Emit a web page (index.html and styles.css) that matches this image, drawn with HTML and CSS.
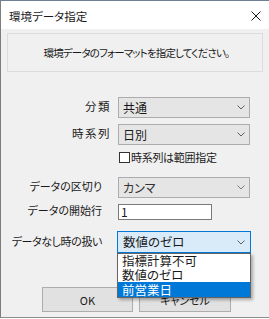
FILE: index.html
```html
<!DOCTYPE html>
<html lang="ja">
<head>
<meta charset="utf-8">
<title>環境データ指定</title>
<link rel="stylesheet" href="styles.css">
</head>
<body>
<div class="window">
  <div class="titlebar">
    <span class="title">環境データ指定</span>
    <svg class="close" width="10" height="10" viewBox="0 0 10 10"><path d="M0.5 0.5 L9.5 9.5 M9.5 0.5 L0.5 9.5" stroke="#1a1a1a" stroke-width="1" fill="none"/></svg>
  </div>
  <div class="client">
    <div class="message">環境データのフォーマットを指定してください。</div>
    <div class="form">
      <div class="row row-1">
        <span class="lbl">分類</span>
        <div class="combo"><span class="val">共通</span><svg class="chev" width="8" height="5" viewBox="0 0 8 5"><path d="M0.5 0.5 L4 4 L7.5 0.5" stroke="#606060" fill="none"/></svg></div>
      </div>
      <div class="row row-2">
        <span class="lbl">時系列</span>
        <div class="combo"><span class="val">日別</span><svg class="chev" width="8" height="5" viewBox="0 0 8 5"><path d="M0.5 0.5 L4 4 L7.5 0.5" stroke="#606060" fill="none"/></svg></div>
      </div>
      <div class="row row-check">
        <span class="lbl"></span>
        <label class="check"><span class="box"></span><span class="ctext">時系列は範囲指定</span></label>
      </div>
      <div class="row row-3">
        <span class="lbl lbl-wide">データの区切り</span>
        <div class="combo"><span class="val dim">カンマ</span><svg class="chev" width="8" height="5" viewBox="0 0 8 5"><path d="M0.5 0.5 L4 4 L7.5 0.5" stroke="#7a7a7a" fill="none"/></svg></div>
      </div>
      <div class="row row-4">
        <span class="lbl lbl-wide">データの開始行</span>
        <div class="textbox">1</div>
      </div>
      <div class="row row-5">
        <span class="lbl lbl-wide lbl-long">データなし時の扱い</span>
        <div class="combo combo-open"><span class="val big">数値のゼロ</span><svg class="chev" width="8" height="5" viewBox="0 0 8 5"><path d="M0.5 0.5 L4 4 L7.5 0.5" stroke="#606060" fill="none"/></svg>
          <ul class="droplist">
            <li>指標計算不可</li>
            <li>数値のゼロ</li>
            <li class="sel">前営業日</li>
          </ul>
        </div>
      </div>
    </div>
    <div class="buttons">
      <button class="btn">OK</button>
      <button class="btn">キャンセル</button>
    </div>
  </div>
</div>
</body>
</html>
```

FILE: styles.css
```css
html, body {
  margin: 0;
  padding: 0;
  background: #ffffff;
}
body {
  width: 269px;
  height: 319px;
  overflow: hidden;
  font-family: "Noto Sans CJK JP", "Noto Sans", sans-serif;
  font-feature-settings: "palt";
  color: #1a1a1a;
}
.window {
  box-sizing: border-box;
  width: 269px;
  height: 318px;
  border-top: 1px solid #6e7f96;
  border-left: 1px solid #7d7d7d;
  border-bottom: 1px solid #8c8c8c;
  display: flex;
  flex-direction: column;
}
.titlebar {
  height: 28px;
  flex: none;
  background: #fff;
  display: flex;
  align-items: center;
  justify-content: space-between;
  padding: 0 8px 0 8px;
}
.title {
  font-size: 11.5px;
  line-height: 14px;
  margin-top: 1px;
}
.close {
  display: block;
  margin-top: 1px;
}
.client {
  flex: 1;
  background: #f0f0f0;
  padding: 4px 6px 0 6px;
}
.message {
  box-sizing: border-box;
  height: 39px;
  border: 1px solid #dcdcdc;
  background: #f0f0f0;
  display: flex;
  align-items: center;
  justify-content: center;
  font-size: 10.5px;
  letter-spacing: -0.85px;
  padding-left: 3px;
}
.form {
  margin-top: 25px;
}
.row {
  display: flex;
  align-items: center;
}
.lbl {
  box-sizing: border-box;
  width: 111px;
  flex: none;
  text-align: right;
  white-space: nowrap;
  padding-right: 7px;
  padding-bottom: 3px;
  font-size: 11.5px;
  line-height: 14px;
  letter-spacing: 1.5px;
}
.lbl-wide {
  padding-right: 16px;
  font-size: 11px;
  letter-spacing: 0;
}
.lbl-long {
  letter-spacing: -0.4px;
}
.row-2 { margin-top: 6px; }
.row-check { margin-top: 5px; height: 14px; }
.row-3 { margin-top: 13px; }
.row-4 { margin-top: 5px; }
.row-5 { margin-top: 11px; }
.combo {
  position: relative;
  box-sizing: border-box;
  width: 132px;
  height: 21px;
  background: #e5e5e5;
  border: 1px solid #acacac;
  display: flex;
  align-items: center;
  justify-content: space-between;
  padding: 0 4px 0 4px;
}
.val {
  font-size: 12px;
  line-height: 14px;
}
.val.dim { color: #333; }
.val.big { font-size: 12.5px; }
.chev { display: block; }
.combo-open {
  margin-left: -1px;
  width: 134px;
  height: 22px;
  background: #d9ebf9;
  border-color: #0078d7;
  padding-left: 5px;
  padding-right: 5px;
}
.check {
  display: flex;
  align-items: center;
  gap: 1px;
}
.box {
  box-sizing: border-box;
  width: 11px;
  height: 11px;
  background: #fff;
  border: 1px solid #333;
  margin-left: 1px;
}
.ctext {
  font-size: 11px;
  line-height: 14px;
  letter-spacing: -0.3px;
}
.textbox {
  box-sizing: border-box;
  width: 94px;
  height: 16px;
  background: #fff;
  border: 1px solid #7a7a7a;
  font-size: 12px;
  line-height: 14px;
  padding-left: 2px;
}
.droplist {
  position: absolute;
  left: -1px;
  top: 21px;
  width: 134px;
  box-sizing: border-box;
  margin: 0;
  padding: 0;
  list-style: none;
  background: #fff;
  border: 1px solid #646464;
  box-shadow: 2px 2px 3px rgba(0, 0, 0, 0.3);
}
.droplist li {
  height: 14px;
  line-height: 14px;
  font-size: 12.5px;
  padding-left: 4px;
  white-space: nowrap;
}
.droplist li.sel {
  height: 15px;
  line-height: 15px;
  background: #0078d7;
  color: #fff;
}
.buttons {
  display: flex;
  gap: 6px;
  margin-top: 34px;
  padding-left: 35px;
}
.btn {
  box-sizing: border-box;
  width: 91px;
  height: 25px;
  background: #e1e1e1;
  border: 1px solid #adadad;
  font-family: "Noto Sans CJK JP", "Noto Sans", sans-serif;
  font-feature-settings: "palt";
  font-size: 11px;
  padding: 0;
  color: #1a1a1a;
}
.btn + .btn { width: 92px; }
```
